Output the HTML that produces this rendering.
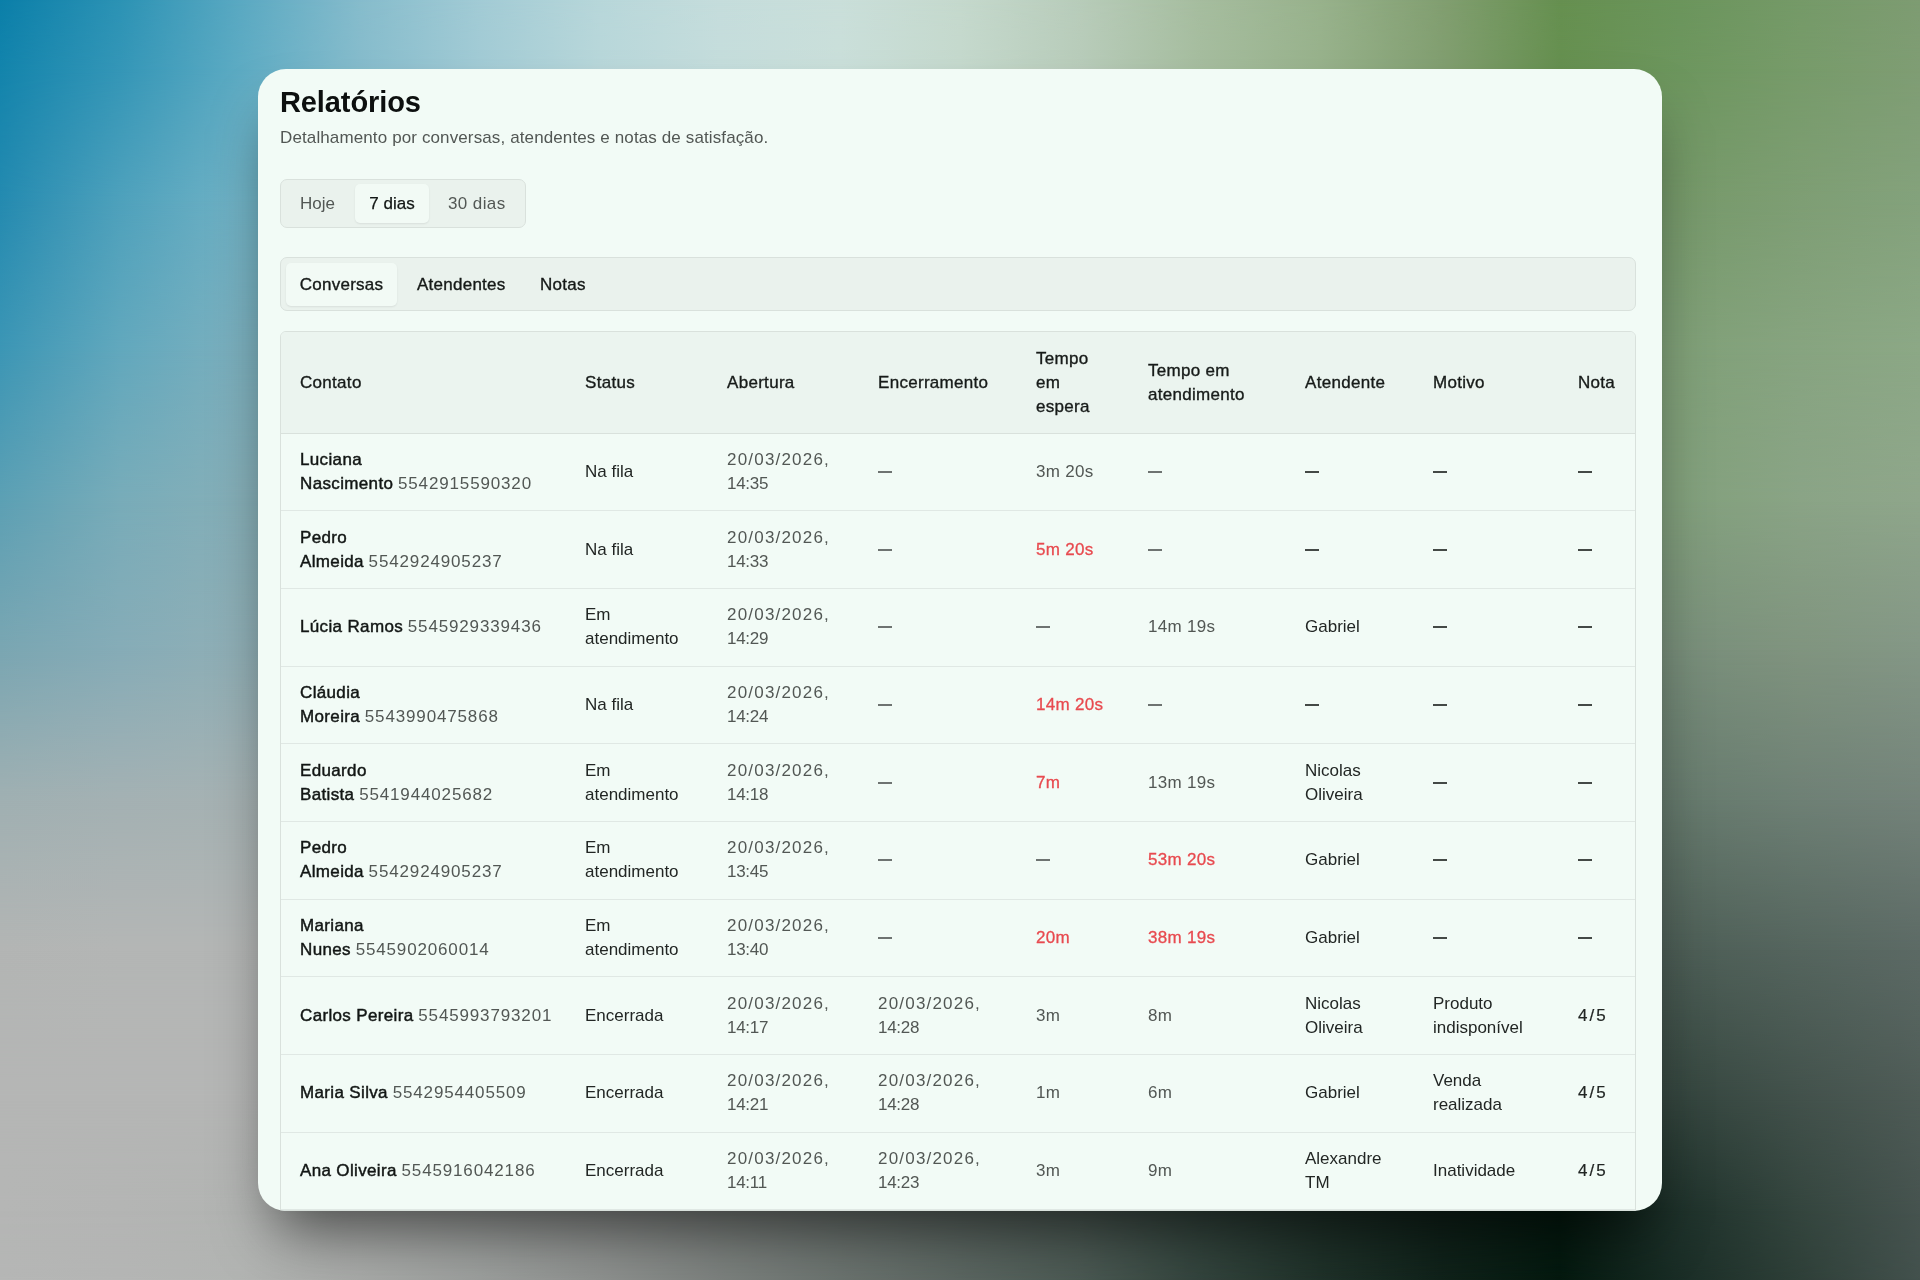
<!DOCTYPE html>
<html lang="pt-BR">
<head>
<meta charset="utf-8">
<title>Relatórios</title>
<style>
*{box-sizing:border-box;margin:0;padding:0}
html,body{width:1920px;height:1280px;overflow:hidden}
body{font-family:"Liberation Sans",sans-serif;color:#161a18;background:#9fb0a8;position:relative}
.bg{position:absolute;left:0;top:0;width:1920px;height:1280px;overflow:hidden}
.card{will-change:transform;position:absolute;left:258px;top:69px;width:1404px;height:1142px;border-radius:28px;background:#f2fbf6;overflow:hidden;box-shadow:0 35px 60px -18px rgba(0,0,0,.58)}
h1{position:absolute;left:22px;top:15px;font-size:29px;font-weight:700;line-height:36px;color:#0d100f;letter-spacing:-0.1px}
.sub{position:absolute;left:22px;top:57px;font-size:17px;line-height:24px;color:#525754;letter-spacing:.12px}
.seg{position:absolute;left:22px;top:110px;width:246px;height:49px;border:1px solid #d9e1dc;border-radius:7px;background:#eaf2ed}
.seg .b{position:absolute;top:4px;height:39px;line-height:39px;font-size:17px;color:#525754}
.seg .act{background:#f2faf5;border-radius:5px;box-shadow:0 1px 2px rgba(0,0,0,.08);color:#121614;-webkit-text-stroke:.25px #121614}
.tabs{position:absolute;left:22px;top:188px;width:1356px;height:54px;border:1px solid #d9e1dc;border-radius:7px;background:#eaf2ed}
.tabs .t{position:absolute;top:5px;height:43px;line-height:43px;font-size:17px;color:#151917;-webkit-text-stroke:.35px #151917;letter-spacing:.25px}
.tabs .act{background:#f2faf5;border-radius:5px;box-shadow:0 1px 2px rgba(0,0,0,.08)}
.tw{position:absolute;left:22px;top:262px;width:1356px;border:1px solid #d9e1dc;border-radius:6px 6px 0 0;overflow:hidden}
table{border-collapse:collapse;table-layout:fixed;width:1354px}
th,td{text-align:left;vertical-align:middle;font-size:17px;line-height:24px;padding:0 0 0 19px;white-space:nowrap}
th{font-weight:400;color:#171b19;-webkit-text-stroke:.35px #171b19;background:#ebf4ef;height:101px;border-bottom:1px solid #d9e1dc;letter-spacing:.3px;padding-top:1px}
td{height:77.7px;border-bottom:1px solid #e0e8e4;color:#222624}
.nm{color:#121614;-webkit-text-stroke:.45px #121614;letter-spacing:.35px}
.n45{color:#222624;-webkit-text-stroke:.2px #222624;letter-spacing:2px}
.ds{display:inline-block;width:13.5px;height:2px;vertical-align:4px;background:#6e7371}
.dk .ds{background:#444946}
.ph{color:#525754;letter-spacing:.85px}
.g{color:#525754}
.dt{color:#525754;letter-spacing:1.2px}
.dt i{font-style:normal;letter-spacing:-.3px}
.r{color:#e84a4f;-webkit-text-stroke:.3px #e84a4f;letter-spacing:.3px}
.g{letter-spacing:.3px}
.dk{color:#2a2e2c}
.d{color:#6a6f6c}
</style>
</head>
<body>
<div class="bg" id="bg"><div style="position:absolute;left:0;top:0px;width:1920px;height:69px;background:linear-gradient(to right,#0b7fa9 0px,#2c93b5 120px,#5aa9c2 240px,#86bccc 360px,#a2cbd5 480px,#b8d7da 600px,#c5dddc 720px,#cadfda 840px,#c5d9cd 960px,#b8ccba 1080px,#a6bd9f 1200px,#98b28c 1320px,#829f71 1440px,#669050 1560px,#6b955c 1680px,#759a68 1800px,#7e9c72 1920px)"><div style="position:absolute;inset:0;background:linear-gradient(to right,#1384ac 0px,#3496b7 120px,#5dabc3 240px,#86bccc 360px,#a2cbd5 480px,#b8d7da 600px,#c5dddc 720px,#cadfda 840px,#c5d9cd 960px,#b8ccba 1080px,#a6bd9f 1200px,#98b28c 1320px,#829f71 1440px,#669050 1560px,#6d965e 1680px,#779b6a 1800px,#7f9d74 1920px);-webkit-mask-image:linear-gradient(to bottom,transparent,#000)"></div></div>
<div style="position:absolute;left:0;top:69px;width:1920px;height:131px;background:linear-gradient(to right,#1384ac 0px,#3496b7 120px,#5dabc3 240px,#86bccc 360px,#a2cbd5 480px,#b8d7da 600px,#c5dddc 720px,#cadfda 840px,#c5d9cd 960px,#b8ccba 1080px,#a6bd9f 1200px,#98b28c 1320px,#829f71 1440px,#669050 1560px,#6d965e 1680px,#779b6a 1800px,#7f9d74 1920px)"><div style="position:absolute;inset:0;background:linear-gradient(to right,#248ab0 0px,#4ea1bc 120px,#70b2c5 240px,#70b0bd 360px,#71aeb6 480px,#72acae 600px,#72aaa7 720px,#72a89f 840px,#73a698 960px,#74a390 1080px,#74a188 1200px,#749f81 1320px,#759d79 1440px,#769b72 1560px,#76996a 1680px,#7e9e74 1800px,#84a27c 1920px);-webkit-mask-image:linear-gradient(to bottom,transparent,#000)"></div></div>
<div style="position:absolute;left:0;top:200px;width:1920px;height:150px;background:linear-gradient(to right,#248ab0 0px,#4ea1bc 120px,#70b2c5 240px,#70b0bd 360px,#71aeb6 480px,#72acae 600px,#72aaa7 720px,#72a89f 840px,#73a698 960px,#74a390 1080px,#74a188 1200px,#749f81 1320px,#759d79 1440px,#769b72 1560px,#76996a 1680px,#7e9e74 1800px,#84a27c 1920px)"><div style="position:absolute;inset:0;background:linear-gradient(to right,#3c96b5 0px,#62a8bd 120px,#7cb0be 240px,#7cafb8 360px,#7dadb2 480px,#7dacac 600px,#7daba7 720px,#7ea9a1 840px,#7ea89b 960px,#7ea795 1080px,#7fa58f 1200px,#7fa48a 1320px,#7fa384 1440px,#80a17e 1560px,#80a078 1680px,#87a480 1800px,#8ca886 1920px);-webkit-mask-image:linear-gradient(to bottom,transparent,#000)"></div></div>
<div style="position:absolute;left:0;top:350px;width:1920px;height:150px;background:linear-gradient(to right,#3c96b5 0px,#62a8bd 120px,#7cb0be 240px,#7cafb8 360px,#7dadb2 480px,#7dacac 600px,#7daba7 720px,#7ea9a1 840px,#7ea89b 960px,#7ea795 1080px,#7fa58f 1200px,#7fa48a 1320px,#7fa384 1440px,#80a17e 1560px,#80a078 1680px,#87a480 1800px,#8ca886 1920px)"><div style="position:absolute;inset:0;background:linear-gradient(to right,#5ca0b4 0px,#78acb9 120px,#86afb8 240px,#86aeb3 360px,#85acae 480px,#85aba9 600px,#85aaa4 720px,#84a99f 840px,#84a89a 960px,#84a695 1080px,#83a590 1200px,#83a48b 1320px,#83a286 1440px,#82a181 1560px,#82a07c 1680px,#8aa486 1800px,#8fa68b 1920px);-webkit-mask-image:linear-gradient(to bottom,transparent,#000)"></div></div>
<div style="position:absolute;left:0;top:500px;width:1920px;height:150px;background:linear-gradient(to right,#5ca0b4 0px,#78acb9 120px,#86afb8 240px,#86aeb3 360px,#85acae 480px,#85aba9 600px,#85aaa4 720px,#84a99f 840px,#84a89a 960px,#84a695 1080px,#83a590 1200px,#83a48b 1320px,#83a286 1440px,#82a181 1560px,#82a07c 1680px,#8aa486 1800px,#8fa68b 1920px)"><div style="position:absolute;inset:0;background:linear-gradient(to right,#7aa6b2 0px,#86acb7 120px,#90afb6 240px,#8eacb1 360px,#8caaac 480px,#8aa7a7 600px,#88a4a2 720px,#86a19d 840px,#849e98 960px,#829c93 1080px,#80998e 1200px,#7e9689 1320px,#7c9484 1440px,#7a917f 1560px,#788e7a 1680px,#80947f 1800px,#849786 1920px);-webkit-mask-image:linear-gradient(to bottom,transparent,#000)"></div></div>
<div style="position:absolute;left:0;top:650px;width:1920px;height:150px;background:linear-gradient(to right,#7aa6b2 0px,#86acb7 120px,#90afb6 240px,#8eacb1 360px,#8caaac 480px,#8aa7a7 600px,#88a4a2 720px,#86a19d 840px,#849e98 960px,#829c93 1080px,#80998e 1200px,#7e9689 1320px,#7c9484 1440px,#7a917f 1560px,#788e7a 1680px,#80947f 1800px,#849786 1920px)"><div style="position:absolute;inset:0;background:linear-gradient(to right,#a0b0b2 0px,#a4b1b3 120px,#a6b2b3 240px,#a1adad 360px,#9ba9a7 480px,#96a4a2 600px,#919f9c 720px,#8b9b96 840px,#869690 960px,#81918a 1080px,#7b8d84 1200px,#76887e 1320px,#718379 1440px,#6b7f73 1560px,#667a6d 1680px,#6e8075 1800px,#74837a 1920px);-webkit-mask-image:linear-gradient(to bottom,transparent,#000)"></div></div>
<div style="position:absolute;left:0;top:800px;width:1920px;height:150px;background:linear-gradient(to right,#a0b0b2 0px,#a4b1b3 120px,#a6b2b3 240px,#a1adad 360px,#9ba9a7 480px,#96a4a2 600px,#919f9c 720px,#8b9b96 840px,#869690 960px,#81918a 1080px,#7b8d84 1200px,#76887e 1320px,#718379 1440px,#6b7f73 1560px,#667a6d 1680px,#6e8075 1800px,#74837a 1920px)"><div style="position:absolute;inset:0;background:linear-gradient(to right,#b3b5b4 0px,#b4b6b5 120px,#b4b6b5 240px,#abafad 360px,#a3a7a5 480px,#9aa09d 600px,#929995 720px,#89918d 840px,#808a86 960px,#78837e 1080px,#6f7b76 1200px,#67746e 1320px,#5e6d66 1440px,#56655e 1560px,#4d5e56 1680px,#55655e 1800px,#5c6a65 1920px);-webkit-mask-image:linear-gradient(to bottom,transparent,#000)"></div></div>
<div style="position:absolute;left:0;top:950px;width:1920px;height:150px;background:linear-gradient(to right,#b3b5b4 0px,#b4b6b5 120px,#b4b6b5 240px,#abafad 360px,#a3a7a5 480px,#9aa09d 600px,#929995 720px,#89918d 840px,#808a86 960px,#78837e 1080px,#6f7b76 1200px,#67746e 1320px,#5e6d66 1440px,#56655e 1560px,#4d5e56 1680px,#55655e 1800px,#5c6a65 1920px)"><div style="position:absolute;inset:0;background:linear-gradient(to right,#b5b6b5 0px,#b5b6b5 120px,#b5b6b5 240px,#aaadab 360px,#a0a3a1 480px,#959a97 600px,#8a908d 720px,#7f8783 840px,#747e7a 960px,#6a7470 1080px,#5f6b66 1200px,#54615c 1320px,#4a5852 1440px,#3f4e48 1560px,#34453e 1680px,#42514b 1800px,#4e5b56 1920px);-webkit-mask-image:linear-gradient(to bottom,transparent,#000)"></div></div>
<div style="position:absolute;left:0;top:1100px;width:1920px;height:111px;background:linear-gradient(to right,#b5b6b5 0px,#b5b6b5 120px,#b5b6b5 240px,#aaadab 360px,#a0a3a1 480px,#959a97 600px,#8a908d 720px,#7f8783 840px,#747e7a 960px,#6a7470 1080px,#5f6b66 1200px,#54615c 1320px,#4a5852 1440px,#3f4e48 1560px,#34453e 1680px,#42514b 1800px,#4e5b56 1920px)"><div style="position:absolute;inset:0;background:linear-gradient(to right,#b5b6b5 0px,#b4b5b4 120px,#b2b4b2 240px,#a8aaa8 360px,#9c9f9d 480px,#8e918f 600px,#7c817e 720px,#6b736f 840px,#5b6661 960px,#4b5953 1080px,#33443d 1200px,#1f3129 1320px,#10221a 1440px,#04190f 1560px,#1e312a 1680px,#34453e 1800px,#46534f 1920px);-webkit-mask-image:linear-gradient(to bottom,transparent,#000)"></div></div>
<div style="position:absolute;left:0;top:1211px;width:1920px;height:69px;background:linear-gradient(to right,#b5b6b5 0px,#b4b5b4 120px,#b2b4b2 240px,#a8aaa8 360px,#9c9f9d 480px,#8e918f 600px,#7c817e 720px,#6b736f 840px,#5b6661 960px,#4b5953 1080px,#33443d 1200px,#1f3129 1320px,#10221a 1440px,#04190f 1560px,#1e312a 1680px,#34453e 1800px,#46534f 1920px)"><div style="position:absolute;inset:0;background:linear-gradient(to right,#b5b6b5 0px,#b4b5b4 120px,#b2b4b2 240px,#a8aaa8 360px,#9c9f9d 480px,#8e918f 600px,#7c817e 720px,#6b736f 840px,#5b6661 960px,#4b5953 1080px,#33443d 1200px,#1f3129 1320px,#10221a 1440px,#04190f 1560px,#1a2d26 1680px,#2e3f38 1800px,#43514d 1920px);-webkit-mask-image:linear-gradient(to bottom,transparent,#000)"></div></div></div><!--bgend-->
<div class="card">
  <h1>Relatórios</h1>
  <div class="sub">Detalhamento por conversas, atendentes e notas de satisfação.</div>
  <div class="seg">
    <div class="b" style="left:19px">Hoje</div>
    <div class="b act" style="left:74px;width:74px;text-align:center">7 dias</div>
    <div class="b" style="left:167px;letter-spacing:.4px">30 dias</div>
  </div>
  <div class="tabs">
    <div class="t act" style="left:5px;width:111px;text-align:center">Conversas</div>
    <div class="t" style="left:136px">Atendentes</div>
    <div class="t" style="left:259px">Notas</div>
  </div>
  <div class="tw">
  <table>
    <colgroup><col style="width:285px"><col style="width:142px"><col style="width:151px"><col style="width:158px"><col style="width:112px"><col style="width:157px"><col style="width:128px"><col style="width:145px"><col style="width:76px"></colgroup>
    <tr><th>Contato</th><th>Status</th><th>Abertura</th><th>Encerramento</th><th>Tempo<br>em<br>espera</th><th>Tempo em<br>atendimento</th><th>Atendente</th><th>Motivo</th><th>Nota</th></tr>
    <tr><td><span class="nm">Luciana<br>Nascimento</span> <span class="ph">5542915590320</span></td><td>Na fila</td><td class="dt">20/03/2026,<br><i>14:35</i></td><td class="d"><i class="ds"></i></td><td class="g">3m 20s</td><td class="d"><i class="ds"></i></td><td class="dk"><i class="ds"></i></td><td class="dk"><i class="ds"></i></td><td class="dk"><i class="ds"></i></td></tr>
    <tr><td><span class="nm">Pedro<br>Almeida</span> <span class="ph">5542924905237</span></td><td>Na fila</td><td class="dt">20/03/2026,<br><i>14:33</i></td><td class="d"><i class="ds"></i></td><td class="r">5m 20s</td><td class="d"><i class="ds"></i></td><td class="dk"><i class="ds"></i></td><td class="dk"><i class="ds"></i></td><td class="dk"><i class="ds"></i></td></tr>
    <tr><td><span class="nm">Lúcia Ramos</span> <span class="ph">5545929339436</span></td><td>Em<br>atendimento</td><td class="dt">20/03/2026,<br><i>14:29</i></td><td class="d"><i class="ds"></i></td><td class="d"><i class="ds"></i></td><td class="g">14m 19s</td><td>Gabriel</td><td class="dk"><i class="ds"></i></td><td class="dk"><i class="ds"></i></td></tr>
    <tr><td><span class="nm">Cláudia<br>Moreira</span> <span class="ph">5543990475868</span></td><td>Na fila</td><td class="dt">20/03/2026,<br><i>14:24</i></td><td class="d"><i class="ds"></i></td><td class="r">14m 20s</td><td class="d"><i class="ds"></i></td><td class="dk"><i class="ds"></i></td><td class="dk"><i class="ds"></i></td><td class="dk"><i class="ds"></i></td></tr>
    <tr><td><span class="nm">Eduardo<br>Batista</span> <span class="ph">5541944025682</span></td><td>Em<br>atendimento</td><td class="dt">20/03/2026,<br><i>14:18</i></td><td class="d"><i class="ds"></i></td><td class="r">7m</td><td class="g">13m 19s</td><td>Nicolas<br>Oliveira</td><td class="dk"><i class="ds"></i></td><td class="dk"><i class="ds"></i></td></tr>
    <tr><td><span class="nm">Pedro<br>Almeida</span> <span class="ph">5542924905237</span></td><td>Em<br>atendimento</td><td class="dt">20/03/2026,<br><i>13:45</i></td><td class="d"><i class="ds"></i></td><td class="d"><i class="ds"></i></td><td class="r">53m 20s</td><td>Gabriel</td><td class="dk"><i class="ds"></i></td><td class="dk"><i class="ds"></i></td></tr>
    <tr><td><span class="nm">Mariana<br>Nunes</span> <span class="ph">5545902060014</span></td><td>Em<br>atendimento</td><td class="dt">20/03/2026,<br><i>13:40</i></td><td class="d"><i class="ds"></i></td><td class="r">20m</td><td class="r">38m 19s</td><td>Gabriel</td><td class="dk"><i class="ds"></i></td><td class="dk"><i class="ds"></i></td></tr>
    <tr><td><span class="nm">Carlos Pereira</span> <span class="ph">5545993793201</span></td><td>Encerrada</td><td class="dt">20/03/2026,<br><i>14:17</i></td><td class="dt">20/03/2026,<br><i>14:28</i></td><td class="g">3m</td><td class="g">8m</td><td>Nicolas<br>Oliveira</td><td>Produto<br>indisponível</td><td class="n45">4/5</td></tr>
    <tr><td><span class="nm">Maria Silva</span> <span class="ph">5542954405509</span></td><td>Encerrada</td><td class="dt">20/03/2026,<br><i>14:21</i></td><td class="dt">20/03/2026,<br><i>14:28</i></td><td class="g">1m</td><td class="g">6m</td><td>Gabriel</td><td>Venda<br>realizada</td><td class="n45">4/5</td></tr>
    <tr><td><span class="nm">Ana Oliveira</span> <span class="ph">5545916042186</span></td><td>Encerrada</td><td class="dt">20/03/2026,<br><i>14:11</i></td><td class="dt">20/03/2026,<br><i>14:23</i></td><td class="g">3m</td><td class="g">9m</td><td>Alexandre<br>TM</td><td>Inatividade</td><td class="n45">4/5</td></tr>
  </table>
  </div>
</div>
</body>
</html>
